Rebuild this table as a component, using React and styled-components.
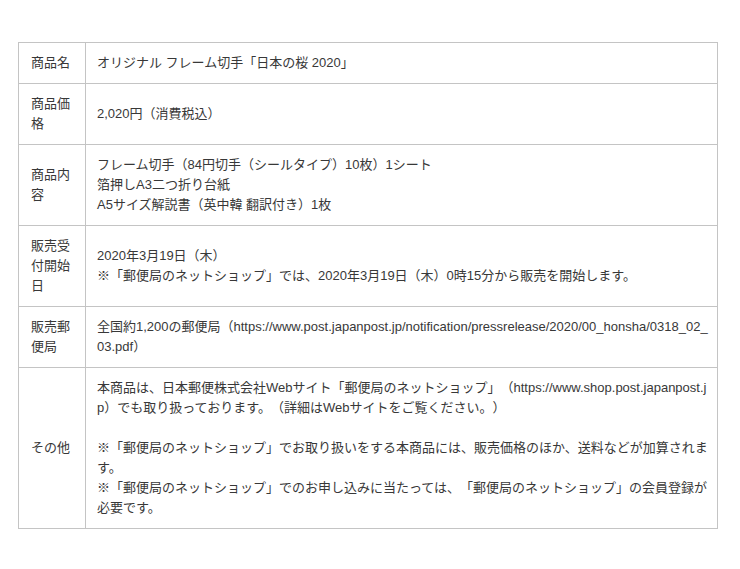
import React from 'react'
import styled, { createGlobalStyle } from 'styled-components';

const GlobalStyle = createGlobalStyle`
  body {
    margin: 0;
    background: #fff;
    font-family: "Liberation Sans", "Noto Sans CJK JP", sans-serif;
    color: #383838;
    text-spacing-trim: space-all;
  }
`;

const Page = styled.div`
  padding: 42px 0 0 18px;
`;

const Table = styled.table`
  width: 700px;
  border-collapse: collapse;
  table-layout: fixed;
  font-size: 13px;
  line-height: 20px;
  text-spacing-trim: space-all;
`;

const Label = styled.th`
  padding: 10px 11px 10px 12px;
  border: 1px solid #c4c4c4;
  font-weight: normal;
  text-align: left;
  vertical-align: middle;
`;

const Cell = styled.td`
  padding: 10px 6px 10px 11px;
  border: 1px solid #c4c4c4;
  vertical-align: middle;
  word-break: break-all;
  overflow-wrap: anywhere;
`;

const Line = styled.div`
  min-height: 20px;
`;

const rows = [
  { label: '商品名', lines: ['オリジナル フレーム切手「日本の桜 2020」'] },
  { label: '商品価格', lines: ['2,020円（消費税込）'] },
  {
    label: '商品内容',
    lines: [
      'フレーム切手（84円切手（シールタイプ）10枚）1シート',
      '箔押しA3二つ折り台紙',
      'A5サイズ解説書（英中韓 翻訳付き）1枚',
    ],
  },
  {
    label: '販売受付開始日',
    lines: [
      '2020年3月19日（木）',
      '※「郵便局のネットショップ」では、2020年3月19日（木）0時15分から販売を開始します。',
    ],
  },
  {
    label: '販売郵便局',
    lines: ['全国約1,200の郵便局（https://www.post.japanpost.jp/notification/pressrelease/2020/00_honsha/0318_02_03.pdf）'],
  },
  {
    label: 'その他',
    lines: [
      '本商品は、日本郵便株式会社Webサイト「郵便局のネットショップ」（https://www.shop.post.japanpost.jp）でも取り扱っております。（詳細はWebサイトをご覧ください。）',
      '',
      '※「郵便局のネットショップ」でお取り扱いをする本商品には、販売価格のほか、送料などが加算されます。',
      '※「郵便局のネットショップ」でのお申し込みに当たっては、「郵便局のネットショップ」の会員登録が必要です。',
    ],
  },
];

const App = () => {
  return (
    <Page>
      <GlobalStyle />
      <Table>
        <colgroup>
          <col style={{ width: 67 }} />
          <col />
        </colgroup>
        <tbody>
          {rows.map((row, index) => (
            <tr key={index}>
              <Label>{row.label}</Label>
              <Cell>
                {row.lines.map((line, i) => (
                  <Line key={i}>{line}</Line>
                ))}
              </Cell>
            </tr>
          ))}
        </tbody>
      </Table>
    </Page>
  )
}

export default App
